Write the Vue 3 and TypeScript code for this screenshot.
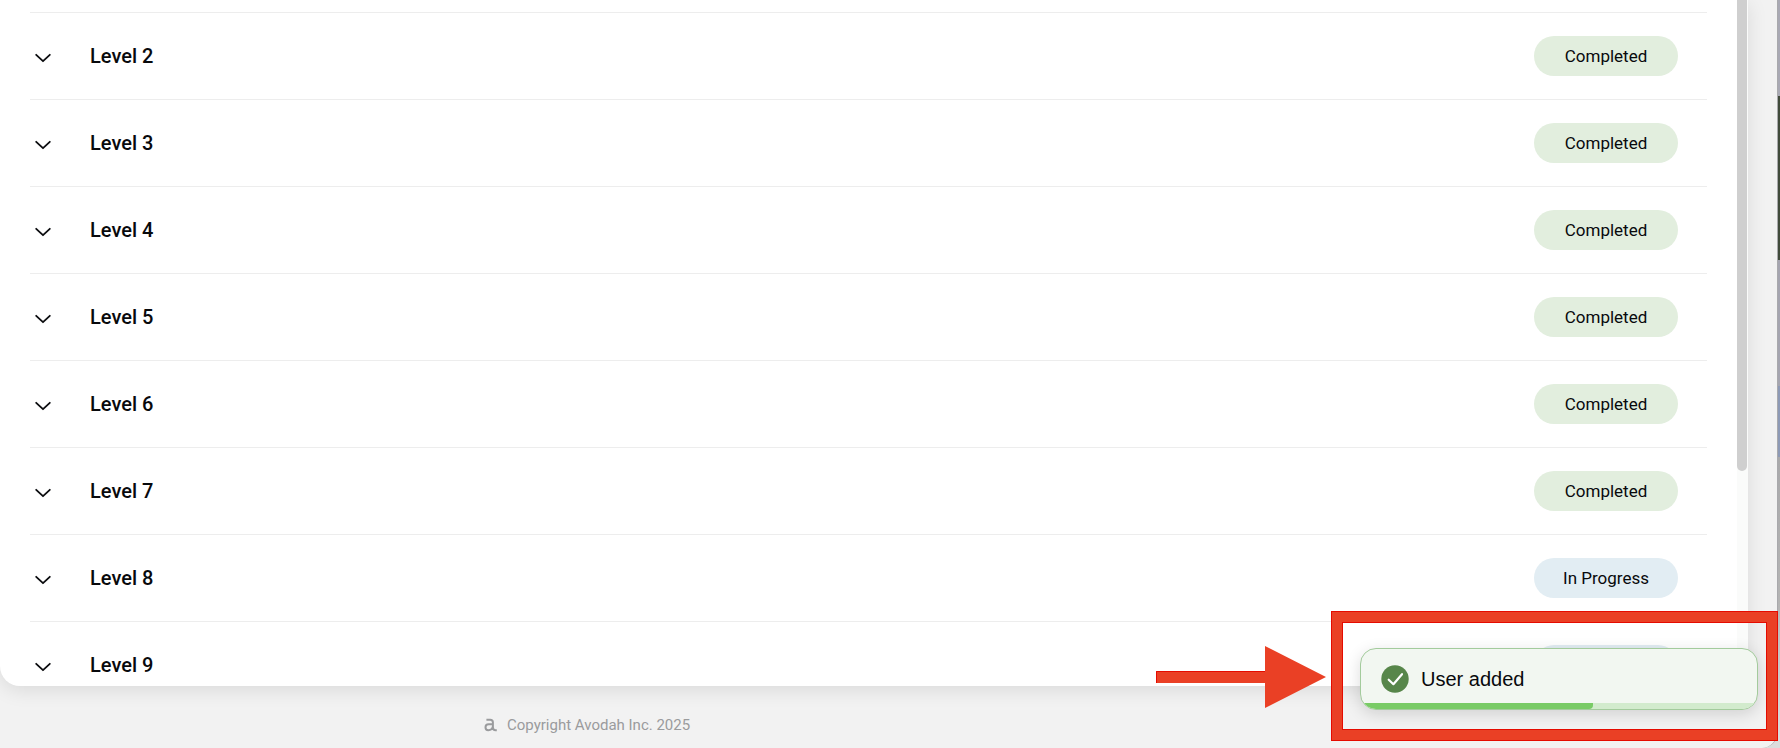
<script setup lang="ts">
interface Level {
  name: string
  status: 'Completed' | 'In Progress'
}

const levels: Level[] = [2, 3, 4, 5, 6, 7, 8, 9].map((n) => ({
  name: `Level ${n}`,
  status: n < 8 ? 'Completed' : 'In Progress',
}))

const progress = 58.5
</script>

<template>
  <div class="desktop">
    <div class="window">
      <main class="card">
        <ul class="levels">
          <li class="row row-tail"></li>
          <li v-for="level in levels" :key="level.name" class="row">
            <button class="toggle" type="button" :aria-label="`Expand ${level.name}`">
              <svg viewBox="0 0 16 16" width="16" height="16" aria-hidden="true">
                <path d="M1.2 4.8 8 11.2 14.8 4.8" fill="none" stroke="#0c0d10" stroke-width="1.8" stroke-linecap="round" stroke-linejoin="round" />
              </svg>
            </button>
            <span class="name">{{ level.name }}</span>
            <span class="pill" :class="{ active: level.status === 'In Progress' }">{{ level.status }}</span>
          </li>
        </ul>
        <div class="track"><div class="thumb"></div></div>
      </main>
      <footer class="footer">
        <svg class="mark" viewBox="0 0 14 14" width="14" height="14" aria-hidden="true">
          <path d="M2.4 1.7H6.2Q8.9 1.7 8.9 4.3V9.2Q8.9 12.2 11.6 12.2H12.8M8.8 6.3H4.6Q1.5 6.3 1.5 9.2Q1.5 12.2 4.3 12.2Q8.2 12.2 8.9 8.4" fill="none" stroke="#9a9b9d" stroke-width="2" />
        </svg>
        <span>Copyright Avodah Inc. 2025</span>
      </footer>
    </div>

    <div class="highlight"></div>
    <svg class="arrow" viewBox="0 0 170 62" width="170" height="62" aria-hidden="true">
      <path d="M0 25H109V0L170 31 109 62V37H0Z" fill="#ea4025" />
      <path d="M109 25.5H.5V37" fill="none" stroke="#e50b00" />
    </svg>
    <div class="toast" role="status">
      <svg viewBox="0 0 28 28" width="28" height="28" aria-hidden="true">
        <circle cx="14" cy="14" r="13.7" fill="#57864a" />
        <path d="M7.7 14.7 12.4 19.2 21 9.2" fill="none" stroke="#fff" stroke-width="2.2" stroke-linecap="round" stroke-linejoin="round" />
      </svg>
      <span>User added</span>
      <div class="bar"><div class="fill" :style="{ width: progress + '%' }"></div></div>
    </div>
  </div>
</template>

<style>
body {
  margin: 0;
}
</style>

<style scoped>
.desktop {
  position: relative;
  box-sizing: border-box;
  height: 100vh;
  padding-right: 2px;
  overflow: hidden;
  font-family: Roboto, "Liberation Sans", sans-serif;
  color: #08090c;
  background: linear-gradient(#a9a9b4 96px, #414b3b 96px, #414b3b 260px, #a5a5b0 260px, #a5a5b0 386px, #8d9ab6 386px, #8d9ab6 457px, #a9a9ab 457px, #b4b4b4 600px, #dcdcdc 740px);
}

.window {
  display: flex;
  flex-direction: column;
  box-sizing: border-box;
  height: 100%;
  overflow: hidden;
  background: #f2f2f2;
  border-right: 1px solid #a9a9ac;
  border-radius: 0 0 16px 0;
}

.card {
  display: flex;
  flex: 1;
  min-height: 0;
  margin-right: 29px;
  overflow: hidden;
  background: #fff;
  border-radius: 0 0 0 20px;
  box-shadow: 0 4px 20px rgba(0, 0, 0, 0.1);
}

.levels {
  flex: 1;
  margin: 0;
  padding: 0 30px;
  list-style: none;
}

.row {
  display: flex;
  align-items: center;
  box-sizing: border-box;
  height: 87px;
  padding-right: 29px;
  border-bottom: 1px solid #ededed;
}

.row-tail {
  height: 13px;
}

.toggle {
  display: flex;
  margin: 4px 34px 0 0;
  padding: 4px 5px;
  background: none;
  border: 0;
}

.name {
  flex: 1;
  font-size: 20px;
  font-weight: 500;
  line-height: 24px;
}

.pill {
  width: 144px;
  border-radius: 20px;
  background: #e2eede;
  font-size: 17px;
  line-height: 40px;
  text-align: center;
}

.pill.active {
  background: #e2edf3;
}

.track {
  width: 11px;
  background: #fafbfa;
}

.thumb {
  width: 10px;
  height: 63vh;
  background: #cfcfcf;
  border-radius: 0 0 5px 5px;
}

.footer {
  display: flex;
  align-items: center;
  gap: 9px;
  box-sizing: border-box;
  height: 62px;
  padding: 16px 0 0 484px;
  color: #9a9b9d;
  font-size: 15px;
  line-height: 20px;
}

.highlight {
  position: absolute;
  right: 2px;
  bottom: 7px;
  box-sizing: border-box;
  width: 447px;
  height: 130px;
  border: 12px solid #ea4025;
  outline: 1px solid #e50b00;
  outline-offset: -1px;
}

.highlight::after {
  content: "";
  display: block;
  height: 100%;
  outline: 1px solid #e50b00;
}

.arrow {
  position: absolute;
  right: 454px;
  bottom: 40px;
}

.toast {
  position: absolute;
  right: 22px;
  bottom: 38px;
  display: flex;
  align-items: center;
  gap: 12px;
  box-sizing: border-box;
  width: 398px;
  height: 62px;
  padding: 0 20px;
  overflow: hidden;
  background: #f2f7f1;
  border: 1px solid #a3cb9c;
  border-radius: 16px;
  box-shadow: 0 4px 16px rgba(0, 0, 0, 0.14);
  font-family: "Liberation Sans", Arial, sans-serif;
  font-size: 20px;
}

.bar {
  position: absolute;
  right: 0;
  bottom: 0;
  left: 0;
  height: 6px;
  background: #d2ebcd;
}

.fill {
  height: 100%;
  background: #79cb66;
  border-radius: 0 0 4px 0;
}
</style>
